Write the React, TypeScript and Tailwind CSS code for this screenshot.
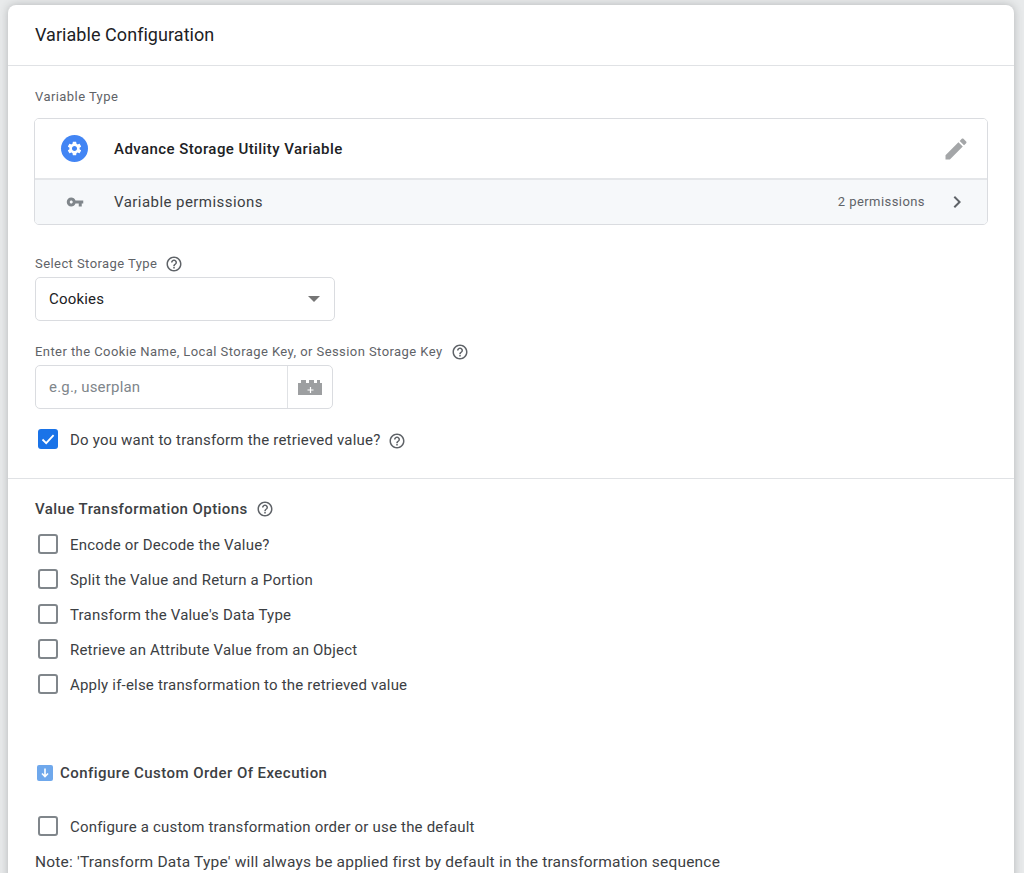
const font = { fontFamily: "Roboto, sans-serif" };

const helpPath =
  "M11 18h2v-2h-2v2zm1-16C6.48 2 2 6.48 2 12s4.48 10 10 10 10-4.48 10-10S17.52 2 12 2zm0 18c-4.41 0-8-3.59-8-8s3.59-8 8-8 8 3.59 8 8-3.59 8-8 8zm0-14c-2.21 0-4 1.79-4 4h2c0-1.1.9-2 2-2s2 .9 2 2c0 2-3 1.75-3 5h2c0-2.25 3-2.5 3-5 0-2.21-1.79-4-4-4z";

function Icon({ d, className }: { d: string; className: string }) {
  return (
    <svg viewBox="0 0 24 24" className={className} fill="currentColor">
      <path d={d} />
    </svg>
  );
}

function Help({ className = "ml-2" }: { className?: string }) {
  return <Icon d={helpPath} className={`h-[18px] w-[18px] shrink-0 text-[#5f6368] ${className}`} />;
}

function Check({ label, checked, help, className = "" }: { label: string; checked?: boolean; help?: boolean; className?: string }) {
  return (
    <div className={`flex h-[21px] items-center ${className}`}>
      {checked ? (
        <div className="mb-[3px] ml-[4px] flex h-5 w-5 shrink-0 items-center justify-center rounded-[3px] bg-[#1a73e8]">
          <svg viewBox="0 0 20 20" className="h-5 w-5" fill="none" stroke="#fff" strokeWidth="1.8">
            <path d="M4.5 10.5l3.7 3.6 7.4-8" />
          </svg>
        </div>
      ) : (
        <div className="mb-[3px] ml-[4px] h-5 w-5 shrink-0 rounded-[3px] border-2 border-[#80868b] bg-white" />
      )}
      <span className="ml-3 text-[15px] tracking-[0.2px] text-[#3c4043]">{label}</span>
      {help && <Help className="ml-2" />}
    </div>
  );
}

const options = [
  "Encode or Decode the Value?",
  "Split the Value and Return a Portion",
  "Transform the Value's Data Type",
  "Retrieve an Attribute Value from an Object",
  "Apply if-else transformation to the retrieved value",
];

export default function App() {
  return (
    <div className="h-[873px] overflow-hidden bg-[#e8eaeb] pl-2 pr-[10px] pt-[5px]" style={font}>
      <div className="h-[900px] rounded-t-lg bg-white shadow-[0_0_8px_rgba(60,64,67,0.3)]">
        <header className="flex h-[61px] items-center border-b border-[#e0e2e5] pl-[27px] pb-[2px]">
          <h2 className="text-[18px] font-normal tracking-[0.05px] text-[#202124]">Variable Configuration</h2>
        </header>

        <div className="pl-[26px] pr-[26px]">
          <div className="mt-[23px] h-[16px] pl-px text-[13px] leading-4 tracking-[0.43px] text-[#5f6368]">Variable Type</div>

          <div className="mt-[13px] overflow-hidden rounded-[5px] border border-[#dadce0]">
            <div className="flex h-[61px] items-center border-b-2 border-[#e4e6e9] bg-white">
              <div className="ml-[26px] flex h-[27px] w-[27px] items-center justify-center rounded-full bg-[#4285f4]">
                <Icon
                  d="M19.14 12.94c.04-.3.06-.61.06-.94 0-.32-.02-.64-.07-.94l2.03-1.58c.18-.14.23-.41.12-.61l-1.92-3.32c-.12-.22-.37-.29-.59-.22l-2.39.96c-.5-.38-1.03-.7-1.62-.94l-.36-2.54c-.04-.24-.24-.41-.48-.41h-3.84c-.24 0-.43.17-.47.41l-.36 2.54c-.59.24-1.13.57-1.62.94l-2.39-.96c-.22-.08-.47 0-.59.22L2.74 8.87c-.12.21-.08.47.12.61l2.03 1.58c-.05.3-.09.63-.09.94s.02.64.07.94l-2.03 1.58c-.18.14-.23.41-.12.61l1.92 3.32c.12.22.37.29.59.22l2.39-.96c.5.38 1.03.7 1.62.94l.36 2.54c.05.24.24.41.48.41h3.84c.24 0 .44-.17.47-.41l.36-2.54c.59-.24 1.13-.56 1.62-.94l2.39.96c.22.08.47 0 .59-.22l1.92-3.32c.12-.22.07-.47-.12-.61l-2.01-1.58zM12 15.6c-1.98 0-3.6-1.62-3.6-3.6s1.62-3.6 3.6-3.6 3.6 1.62 3.6 3.6-1.62 3.6-3.6 3.6z"
                  className="h-[17px] w-[17px] text-white"
                />
              </div>
              <span className="ml-[26px] mt-[2px] text-[15px] font-medium tracking-[0.43px] text-[#202124]">Advance Storage Utility Variable</span>
              <Icon
                d="M3 17.25V21h3.75L17.81 9.94l-3.75-3.75L3 17.25zM20.71 7.04c.39-.39.39-1.02 0-1.41l-2.34-2.34c-.39-.39-1.02-.39-1.41 0l-1.83 1.83 3.75 3.75 1.83-1.83z"
                className="ml-auto mr-[17px] h-[28px] w-[28px] text-[#a4a6a8]"
              />
            </div>
            <div className="flex h-[44px] items-center bg-[#f6f8fa]">
              <Icon
                d="M12.65 10C11.83 7.67 9.61 6 7 6c-3.31 0-6 2.69-6 6s2.69 6 6 6c2.61 0 4.83-1.67 5.65-4H17v4h4v-4h2v-4H12.65zM7 14c-1.1 0-2-.9-2-2s.9-2 2-2 2 .9 2 2-.9 2-2 2z"
                className="ml-[31px] h-[18px] w-[18px] text-[#80868b]"
              />
              <span className="ml-[30px] text-[15px] tracking-[0.45px] text-[#3c4043]">Variable permissions</span>
              <span className="ml-auto text-[13px] tracking-[0.43px] text-[#5f6368]">2 permissions</span>
              <Icon d="M10 6L8.59 7.41 13.17 12l-4.58 4.59L10 18l6-6z" className="ml-[20px] mr-[18px] h-[24px] w-[24px] text-[#5f6368]" />
            </div>
          </div>

          <div className="mt-[30px] flex h-[18px] items-center pl-px">
            <span className="text-[13px] tracking-[0.43px] text-[#5f6368]">Select Storage Type</span>
            <Help />
          </div>
          <div className="ml-px mt-[4px] flex h-[44px] w-[300px] items-center justify-between rounded-[5px] border border-[#dadce0] bg-white pl-[13px] pr-[14px]">
            <span className="text-[15px] tracking-[0.2px] text-[#202124]">Cookies</span>
            <svg viewBox="0 0 12 6" className="h-[6px] w-3 fill-[#757575]">
              <path d="M0 0h12L6 6z" />
            </svg>
          </div>

          <div className="mt-[22px] flex h-[18px] items-center pl-px">
            <span className="text-[13px] tracking-[0.43px] text-[#5f6368]">Enter the Cookie Name, Local Storage Key, or Session Storage Key</span>
            <Help />
          </div>
          <div className="ml-px mt-[4px] flex h-[44px] w-[298px] rounded-[5px] border border-[#dadce0] bg-white">
            <div className="flex w-[251px] items-center pl-[13px] text-[15px] tracking-[0.2px] text-[#80868b]">e.g., userplan</div>
            <div className="flex flex-1 items-center justify-center border-l border-[#e0e2e5]">
              <svg viewBox="0 0 25 15" className="h-[15px] w-[25px]">
                <path d="M0 3h3V0h5v3h3V0h5v3h3V0h3v3h2v12H0z" fill="#9d9fa1" />
                <path d="M12.5 7v6M9.5 10h6" stroke="#fff" strokeWidth="1.2" />
              </svg>
            </div>
          </div>

          <Check className="mt-[21px]" label="Do you want to transform the retrieved value?" checked help />
        </div>

        <div className="mt-[27px] border-t border-[#e0e2e5]" />

        <div className="pl-[26px] pr-[26px]">
          <div className="mt-[21px] flex h-[18px] items-center pl-px">
            <span className="text-[15px] font-medium tracking-[0.43px] text-[#3c4043]">Value Transformation Options</span>
            <Help className="ml-2" />
          </div>
          <div className="mt-[17px] flex flex-col gap-[14px]">
            {options.map((o) => (
              <Check key={o} label={o} />
            ))}
          </div>

          <div className="mt-[68px] flex h-[18px] items-center pl-[3px]">
            <svg viewBox="0 0 16 16" className="h-4 w-4 shrink-0">
              <rect width="16" height="16" rx="2" fill="#6fa8ec" />
              <path d="M8 3.5v8M5 8.5l3 3.2 3-3.2" stroke="#fff" strokeWidth="1.6" fill="none" />
            </svg>
            <span className="ml-[7px] text-[15px] font-medium tracking-[0.45px] text-[#3c4043]">Configure Custom Order Of Execution</span>
          </div>
          <Check className="mt-[35px]" label="Configure a custom transformation order or use the default" />
          <div className="mt-[13px] pl-px text-[15.5px] tracking-[0.2px] text-[#3c4043]">
            Note: 'Transform Data Type' will always be applied first by default in the transformation sequence
          </div>
        </div>
      </div>
    </div>
  );
}
